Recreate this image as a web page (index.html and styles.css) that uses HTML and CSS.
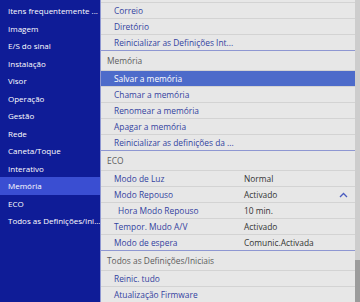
FILE: index.html
```html
<!DOCTYPE html>
<html>

<head>
    <meta charset="UTF-8">
    <title>Memória</title>
    <link rel="stylesheet" href="styles.css">
</head>

<body>
    <div class="screen">
        <ul class="menu">
            <li>Itens frequentemente ...</li>
            <li>Imagem</li>
            <li>E/S do sinal</li>
            <li>Instalação</li>
            <li>Visor</li>
            <li>Operação</li>
            <li>Gestão</li>
            <li>Rede</li>
            <li>Caneta/Toque</li>
            <li>Interativo</li>
            <li class="active">Memória</li>
            <li>ECO</li>
            <li>Todos as Definições/Ini...</li>
        </ul>

        <div class="panel">
            <div class="list">
                <div class="section">
                    <div class="row first">Correio</div>
                    <div class="row">Diretório</div>
                    <div class="row">Reinicializar as Definições Int...</div>
                </div>

                <div class="section">
                    <div class="head">Memória</div>
                    <div class="row selected">Salvar a memória</div>
                    <div class="row">Chamar a memória</div>
                    <div class="row">Renomear a memória</div>
                    <div class="row">Apagar a memória</div>
                    <div class="row">Reinicializar as definições da ...</div>
                </div>

                <div class="section">
                    <div class="head">ECO</div>
                    <div class="row"><span class="label">Modo de Luz</span><span class="value">Normal</span></div>
                    <div class="row"><span class="label">Modo Repouso</span><span class="value">Activado</span>
                        <svg class="chevron" width="9" height="6" viewBox="0 0 9 6">
                            <polyline points="1,5 4.5,1.5 8,5" fill="none" stroke="#4a5cc0" stroke-width="1.3" />
                        </svg>
                    </div>
                    <div class="row sub"><span class="label">Hora Modo Repouso</span><span class="value">10 min.</span></div>
                    <div class="row"><span class="label">Tempor. Mudo A/V</span><span class="value">Activado</span></div>
                    <div class="row"><span class="label">Modo de espera</span><span class="value">Comunic.Activada</span></div>
                </div>

                <div class="section last">
                    <div class="head">Todos as Definições/Iniciais</div>
                    <div class="row">Reinic. tudo</div>
                    <div class="row">Atualização Firmware</div>
                </div>
            </div>
            <div class="scrollbar">
                <div class="thumb"></div>
            </div>
        </div>
    </div>
</body>

</html>
```

FILE: styles.css
```css
body {
    margin: 0;
    font-family: "Open Sans", "Noto Sans", sans-serif;
    font-size: 8.4px;
    overflow: hidden;
}

.screen {
    display: flex;
    width: 360px;
    height: 302px;
    overflow: hidden;
}

.menu {
    width: 100px;
    flex-shrink: 0;
    margin: 0;
    padding: 2px 0 0 0;
    list-style: none;
    background-color: #0f1c97;
}

.menu li {
    height: 17.5px;
    line-height: 17.5px;
    padding: 0 0 0 8px;
    font-size: 8px;
    color: #ffffff;
    white-space: nowrap;
    overflow: hidden;
}

.menu li.active {
    background-color: #3a4ed2;
}

.panel {
    flex: 1;
    display: flex;
    background-color: #e7e7e7;
    border-left: 1px solid #8e97d2;
    overflow: hidden;
}

.list {
    flex: 1;
    min-width: 0;
    padding-top: 2px;
}

.section {
    border-bottom: 1px solid #8e97d2;
}

.section.last {
    border-bottom: none;
}

.head {
    height: 19px;
    line-height: 19px;
    padding-left: 6px;
    color: #5c5c5c;
    border-bottom: 1px solid #d3d3d3;
    white-space: nowrap;
}

.row {
    display: flex;
    align-items: center;
    height: 15px;
    padding-left: 13px;
    color: #33429f;
    border-bottom: 1px solid #d3d3d3;
    white-space: nowrap;
    overflow: hidden;
}

.row.first {
    border-top: 1px solid #d3d3d3;
}

.section .row:last-child {
    border-bottom: none;
}

.row.sub {
    padding-left: 17px;
}

.row.selected {
    background-color: #4d6bca;
    color: #ffffff;
}

.label {
    width: 130px;
    flex-shrink: 0;
}

.row.sub .label {
    width: 126px;
}

.value {
    flex: 1;
    color: #333333;
}

.chevron {
    margin-right: 7px;
}

.scrollbar {
    width: 5px;
    flex-shrink: 0;
    display: flex;
    flex-direction: column;
    justify-content: flex-end;
    background-color: #cdcdcd;
}

.thumb {
    height: 42px;
    background-color: #9c9c9c;
}
```
